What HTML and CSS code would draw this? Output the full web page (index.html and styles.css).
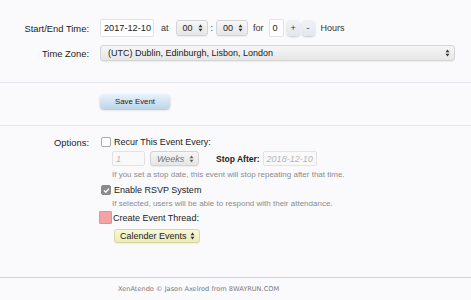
FILE: index.html
```
<!DOCTYPE html>
<html>
<head>
<meta charset="utf-8">
<link rel="stylesheet" href="styles.css">
</head>
<body>
<div class="page">
  <div class="row row-time">
    <div class="label">Start/End Time:</div>
    <div class="ctrl">
      <div class="input date">2017-12-10</div>
      <span class="word w-at">at</span>
      <div class="select sel-small"><span>00</span><svg class="arr" width="5" height="8" viewBox="0 0 5 8"><path d="M0.5 3.2 L2.5 0.6 L4.5 3.2Z M0.5 4.8 L2.5 7.4 L4.5 4.8Z" fill="#333"/></svg></div>
      <span class="word w-colon">:</span>
      <div class="select sel-small"><span>00</span><svg class="arr" width="5" height="8" viewBox="0 0 5 8"><path d="M0.5 3.2 L2.5 0.6 L4.5 3.2Z M0.5 4.8 L2.5 7.4 L4.5 4.8Z" fill="#333"/></svg></div>
      <span class="word w-for">for</span>
      <div class="input num">0</div>
      <div class="pm pm-first">+</div>
      <div class="pm">-</div>
      <span class="word w-hours">Hours</span>
    </div>
  </div>
  <div class="row row-tz">
    <div class="label">Time Zone:</div>
    <div class="ctrl">
      <div class="select sel-tz"><span>(UTC) Dublin, Edinburgh, Lisbon, London</span><svg class="arr" width="5" height="8" viewBox="0 0 5 8"><path d="M0.5 3.2 L2.5 0.6 L4.5 3.2Z M0.5 4.8 L2.5 7.4 L4.5 4.8Z" fill="#333"/></svg></div>
    </div>
  </div>
  <div class="sep"></div>
  <div class="row row-save">
    <div class="label"></div>
    <div class="ctrl"><div class="btn-save">Save Event</div></div>
  </div>
  <div class="sep sep2"></div>
  <div class="row row-opt">
    <div class="label">Options:</div>
    <div class="ctrl">
      <span class="cb"></span><span class="opt-text">Recur This Event Every:</span>
    </div>
  </div>
  <div class="row row-recur">
    <div class="label"></div>
    <div class="ctrl indent">
      <div class="input dis num1">1</div>
      <div class="select sel-weeks"><span>Weeks</span><svg class="arr" width="5" height="8" viewBox="0 0 5 8"><path d="M0.5 3.2 L2.5 0.6 L4.5 3.2Z M0.5 4.8 L2.5 7.4 L4.5 4.8Z" fill="#666"/></svg></div>
      <span class="stop">Stop After:</span>
      <div class="input dis date2">2018-12-10</div>
    </div>
  </div>
  <div class="row row-help">
    <div class="label"></div>
    <div class="ctrl indent"><p class="help">If you set a stop date, this event will stop repeating after that time.</p></div>
  </div>
  <div class="row row-rsvp">
    <div class="label"></div>
    <div class="ctrl">
      <span class="cb cb-on"><svg width="7" height="7" viewBox="0 0 7 7"><path d="M1 3.6 L2.8 5.3 L6 1.6" stroke="#fff" stroke-width="1.4" fill="none"/></svg></span><span class="opt-text">Enable RSVP System</span>
    </div>
  </div>
  <div class="row row-help2">
    <div class="label"></div>
    <div class="ctrl indent"><p class="help">If selected, users will be able to respond with their attendance.</p></div>
  </div>
  <div class="row row-thread">
    <div class="label"></div>
    <div class="ctrl">
      <span class="cb cb-red"></span><span class="opt-text">Create Event Thread:</span>
    </div>
  </div>
  <div class="row row-cal">
    <div class="label"></div>
    <div class="ctrl indent">
      <div class="select sel-cal"><span>Calender Events</span><svg class="arr" width="5" height="8" viewBox="0 0 5 8"><path d="M0.5 3.2 L2.5 0.6 L4.5 3.2Z M0.5 4.8 L2.5 7.4 L4.5 4.8Z" fill="#333"/></svg></div>
    </div>
  </div>
  <div class="footer">
    <span>XenAtendo © Jason Axelrod from 8WAYRUN.COM</span>
  </div>
</div>
</body>
</html>
```
FILE: styles.css
```
html, body {
  margin: 0;
  padding: 0;
  background: #fafafd;
}
body {
  font-family: "Liberation Sans", Arial, sans-serif;
  color: #222;
  width: 471px;
  height: 300px;
  overflow: hidden;
}
.page {
  padding-top: 19px;
}
.row {
  display: grid;
  grid-template-columns: 89px 1fr;
  column-gap: 11px;
  align-items: center;
}
.label {
  text-align: right;
  font-size: 9.4px;
  color: #222;
  white-space: nowrap;
}
.ctrl {
  display: flex;
  align-items: center;
  font-size: 9px;
  white-space: nowrap;
}
.indent {
  padding-left: 12px;
}
.row-time { height: 18px; }
.row-tz { height: 16px; margin-top: 8px; }
.input {
  background: #fff;
  border: 1px solid #e2e2e2;
  border-radius: 2px;
  height: 16px;
  box-sizing: border-box;
  display: flex;
  align-items: center;
  padding: 0 3px;
  font-size: 9.2px;
  color: #222;
}
.date { width: 54px; height: 18px; }
.num { width: 15px; height: 18px; }
.word { color: #333; font-size: 9px; }
.w-at { margin: 0 7px 0 7px; }
.w-colon { margin: 0 3px; }
.w-for { margin: 0 5px 0 5px; }
.w-hours { margin-left: 6px; }
.select {
  display: flex;
  align-items: center;
  justify-content: space-between;
  box-sizing: border-box;
  border: 1px solid #d4d4d4;
  border-radius: 3px;
  background: linear-gradient(#f6f6f6, #e6e6e6);
  box-shadow: 0 1px 1px rgba(0,0,0,0.06);
  padding: 0 4px 0 6px;
  color: #222;
  font-size: 9px;
}
.sel-small { width: 32px; height: 16px; }
.sel-tz { width: 355px; height: 16px; padding-left: 7px; }
.pm {
  width: 13px;
  height: 16px;
  margin-left: 2px;
  border-radius: 4px;
  background: linear-gradient(#f0f2f7, #e2e6ef);
  box-shadow: 0 1px 2px rgba(0,0,0,0.2);
  display: flex;
  align-items: center;
  justify-content: center;
  font-size: 9px;
  color: #333;
}
.pm-first { margin-left: 3px; }
.sep {
  height: 1px;
  background: #e6e8ef;
  margin-top: 21px;
}
.row-save { height: 15px; margin-top: 11px; }
.btn-save {
  width: 70px;
  height: 15px;
  border-radius: 4px;
  background: linear-gradient(#eaf2fa, #bcd5ea);
  box-shadow: 0 1px 2px rgba(0,0,0,0.25);
  font-size: 7.8px;
  display: flex;
  align-items: center;
  justify-content: center;
  color: #222;
}
.sep2 { margin-top: 16px; }
.row-opt { height: 12px; margin-top: 10px; }
.cb {
  width: 8px;
  height: 8px;
  border: 1px solid #aaa;
  border-radius: 2px;
  background: #fff;
  margin: 0 3px 0 1px;
  display: inline-flex;
  align-items: center;
  justify-content: center;
  flex: none;
}
.cb-on {
  background: #8a8a8a;
  border-color: #8a8a8a;
}
.cb-red {
  width: 11px;
  height: 11px;
  border-radius: 1px;
  border: 1px solid #ef8d8d;
  background: #f4a3a3;
  margin: 0 1px 0 -1px;
}
.opt-text { font-size: 9px; color: #222; }
.row-recur { height: 15px; margin-top: 3px; }
.dis {
  background: #f9f9f9;
  border-color: #e3e3e3;
  color: #b5b5b5;
  font-style: italic;
  font-size: 9px;
}
.num1 { width: 33px; height: 15px; }
.sel-weeks {
  width: 49px;
  height: 15px;
  margin-left: 5px;
  color: #777;
  font-style: italic;
  padding-left: 6px;
}
.stop {
  margin-left: 17px;
  margin-right: 3px;
  font-size: 8.5px;
  font-weight: bold;
  color: #222;
}
.date2 { width: 54px; height: 15px; }
.row-help { height: 10px; margin-top: 3px; }
.help {
  margin: 0;
  font-size: 8px;
  color: #8a8a8a;
  white-space: nowrap;
}
.row-rsvp { height: 12px; margin-top: 5px; }
.row-help2 { height: 10px; margin-top: 2px; }
.row-thread { height: 13px; margin-top: 3px; }
.row-cal { height: 14px; margin-top: 5px; }
.sel-cal {
  width: 86px;
  height: 14px;
  margin-left: 2px;
  background: linear-gradient(#f7f8d6, #eaedb9);
  border-color: #d6d89e;
  padding-left: 5px;
}
.footer {
  margin-top: 34px;
  border-top: 1px solid #c5d9e2;
  padding-top: 7px;
  padding-left: 118px;
  font-family: "DejaVu Sans", sans-serif;
  font-size: 6.6px;
  color: #777;
}
```
